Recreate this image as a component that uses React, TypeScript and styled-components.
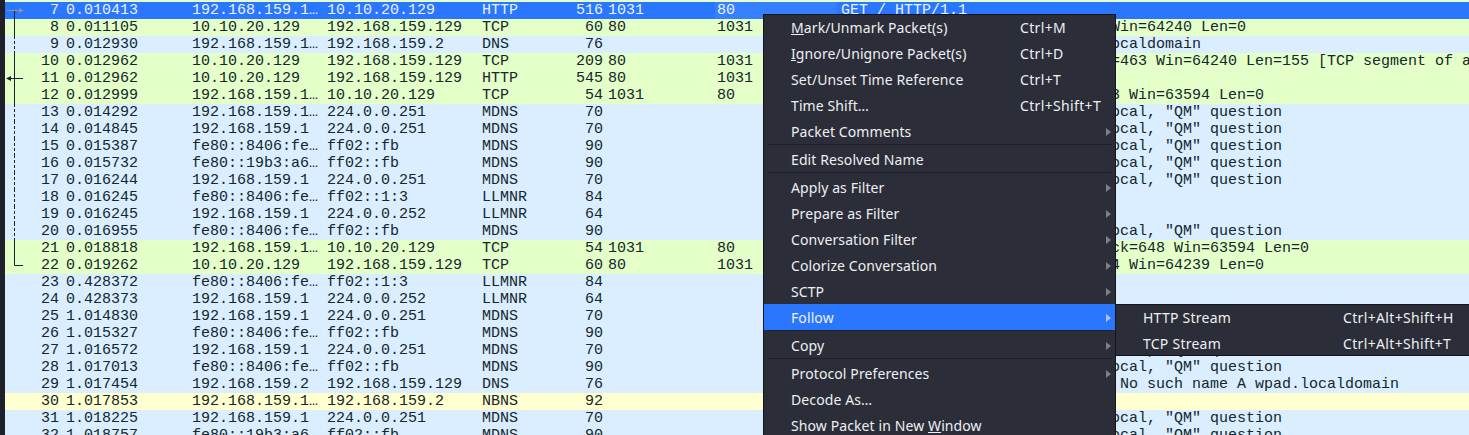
import React from "react";
import styled, { createGlobalStyle } from "styled-components";

const Global = createGlobalStyle`
  html, body { margin: 0; padding: 0; background: #daeeff; overflow: hidden; }
`;

type Tone = "sel" | "green" | "blue" | "yellow";
const toneBg: Record<Tone, string> = { sel: "#2a76ff", green: "#e4ffc7", blue: "#daeeff", yellow: "#ffffcf" };

const Page = styled.div`
  position: relative;
  width: 1469px;
  height: 435px;
  overflow: hidden;
  display: flex;
  background: #daeeff;
`;
const Strip = styled.div`
  width: 5px;
  flex: none;
  background: #1f2029;
`;
const List = styled.div`
  flex: 1;
  min-width: 0;
  display: flex;
  flex-direction: column;
  padding-top: 2px;
  background: linear-gradient(#e4ffc7 2px, transparent 2px);
`;
const Row = styled.div<{ $tone: Tone }>`
  flex: none;
  height: 17px;
  display: grid;
  grid-template-columns: 54px 7px 126px 135px 155px 78px 43px 5px 109px 124px 1fr;
  background: ${(p) => toneBg[p.$tone]};
  color: ${(p) => (p.$tone === "sel" ? "#e8f1ff" : "#12272e")};
  font: 15px/17px "Liberation Mono", monospace;
  white-space: pre;
`;
const NoCell = styled.div`
  position: relative;
  text-align: right;
`;
const Cell = styled.div`
  overflow: hidden;
`;
const FocusCell = styled.div<{ $on: boolean }>`
  overflow: hidden;
  margin-left: -2px;
  padding-left: 2px;
  margin-right: 4px;
  background: ${(p) => (p.$on ? "#3580ff" : "transparent")};
`;
const Gap = styled.div``;
const RightCell = styled.div`
  text-align: right;
`;
const Graph = styled.svg`
  position: absolute;
  left: 0;
  top: 0;
  width: 24px;
  height: 17px;
`;

const Menu = styled.div`
  position: absolute;
  left: 763px;
  top: 14px;
  width: 351px;
  background: #2b2d38;
  border: 1px solid #14151b;
  color: #eef0f2;
  font: 14px/26px "Noto Sans", sans-serif;
  letter-spacing: 0.1px;
`;
const MenuBody = styled.div`
  margin-top: -1px;
`;
const Item = styled.div<{ $active?: boolean }>`
  height: 26px;
  position: relative;
  display: flex;
  padding: 1px 0 0 27px;
  background: ${(p) => (p.$active ? "#2a76ff" : "transparent")};
  box-sizing: border-box;
`;
const Label = styled.span`
  width: 229px;
  flex: none;
  white-space: pre;
`;
const Shortcut = styled.span`
  white-space: pre;
  letter-spacing: 0.35px;
`;
const Mnemonic = styled.span`
  text-decoration: underline;
`;
const Arrow = styled.i<{ $active?: boolean }>`
  position: absolute;
  right: 4px;
  top: 10px;
  width: 0;
  height: 0;
  border-left: 5px solid ${(p) => (p.$active ? "#a9c6ff" : "#7d808b")};
  border-top: 4px solid transparent;
  border-bottom: 4px solid transparent;
`;
const Sep = styled.div`
  height: 2px;
  box-sizing: border-box;
  margin: 0 4px;
  border-top: 1px solid #1c1d25;
`;
const Submenu = styled.div`
  position: absolute;
  left: 1115px;
  top: 304px;
  width: 354px;
  height: 50px;
  background: #2b2d38;
  border: 1px solid #14151b;
  border-right: none;
  color: #eef0f2;
  font: 14px/26px "Noto Sans", sans-serif;
  letter-spacing: 0.25px;
`;
const SubItem = styled.div`
  height: 26px;
  display: flex;
  padding-left: 27px;
`;
const SubLabel = styled.span`
  width: 200px;
  flex: none;
`;

type R = [number, string, string, string, string, string, string, string, string, Tone];
const SRC = "192.168.159.1…";
const FE = "fe80::8406:fe…";
const FE2 = "fe80::19b3:a6…";
const ONE = "192.168.159.1";
const SV = "10.10.20.129";
const CL = "192.168.159.129";
const QM = 'Standard query 0x0000 A wpad.local, "QM" question';
const LL = "Standard query 0x0000 A wpad";
const rows: R[] = [
  [7, "0.010413", SRC, SV, "HTTP", "516", "1031", "80", "GET / HTTP/1.1", "sel"],
  [8, "0.011105", SV, CL, "TCP", "60", "80", "1031", "80 → 1031 [ACK] Seq=1 Ack=463 Win=64240 Len=0", "green"],
  [9, "0.012930", SRC, "192.168.159.2", "DNS", "76", "", "", "Standard query 0x7a2c A wpad.localdomain", "blue"],
  [10, "0.012962", SV, CL, "TCP", "209", "80", "1031", "80 → 1031 [PSH, ACK] Seq=1 Ack=463 Win=64240 Len=155 [TCP segment of a reassembled PDU]", "green"],
  [11, "0.012962", SV, CL, "HTTP", "545", "80", "1031", "HTTP/1.1 200 OK  (text/html)", "green"],
  [12, "0.012999", SRC, SV, "TCP", "54", "1031", "80", "1031 → 80 [ACK] Seq=463 Ack=153 Win=63594 Len=0", "green"],
  [13, "0.014292", SRC, "224.0.0.251", "MDNS", "70", "", "", QM, "blue"],
  [14, "0.014845", ONE, "224.0.0.251", "MDNS", "70", "", "", QM, "blue"],
  [15, "0.015387", FE, "ff02::fb", "MDNS", "90", "", "", QM, "blue"],
  [16, "0.015732", FE2, "ff02::fb", "MDNS", "90", "", "", QM, "blue"],
  [17, "0.016244", ONE, "224.0.0.251", "MDNS", "70", "", "", QM, "blue"],
  [18, "0.016245", FE, "ff02::1:3", "LLMNR", "84", "", "", LL, "blue"],
  [19, "0.016245", ONE, "224.0.0.252", "LLMNR", "64", "", "", LL, "blue"],
  [20, "0.016955", FE, "ff02::fb", "MDNS", "90", "", "", QM, "blue"],
  [21, "0.018818", SRC, SV, "TCP", "54", "1031", "80", "1031 → 80 [FIN, ACK] Seq=463 Ack=648 Win=63594 Len=0", "green"],
  [22, "0.019262", SV, CL, "TCP", "60", "80", "1031", "80 → 1031 [ACK] Seq=648 Ack=464 Win=64239 Len=0", "green"],
  [23, "0.428372", FE, "ff02::1:3", "LLMNR", "84", "", "", LL, "blue"],
  [24, "0.428373", ONE, "224.0.0.252", "LLMNR", "64", "", "", LL, "blue"],
  [25, "1.014830", ONE, "224.0.0.251", "MDNS", "70", "", "", QM, "blue"],
  [26, "1.015327", FE, "ff02::fb", "MDNS", "90", "", "", QM, "blue"],
  [27, "1.016572", ONE, "224.0.0.251", "MDNS", "70", "", "", QM, "blue"],
  [28, "1.017013", FE, "ff02::fb", "MDNS", "90", "", "", QM, "blue"],
  [29, "1.017454", "192.168.159.2", CL, "DNS", "76", "", "", "Standard query response 0x7a2c No such name A wpad.localdomain", "blue"],
  [30, "1.017853", SRC, "192.168.159.2", "NBNS", "92", "", "", "Name query NB WPAD<00>", "yellow"],
  [31, "1.018225", ONE, "224.0.0.251", "MDNS", "70", "", "", QM, "blue"],
  [32, "1.018757", FE2, "ff02::fb", "MDNS", "90", "", "", QM, "blue"],
];

const INK = "#12272e";
function RelGraph({ n }: { n: number }) {
  if (n === 7)
    return (
      <Graph viewBox="0 0 24 17">
        <path d="M9.5 8.5V17" stroke={INK} fill="none" />
        <path d="M2 8.5H18" stroke="#8d93a0" fill="none" />
        <path d="M19 8.5l-5-2.5v5z" fill="#8d93a0" />
      </Graph>
    );
  if (n === 22)
    return (
      <Graph viewBox="0 0 24 17">
        <path d="M9.5 0V8.5H18" stroke={INK} fill="none" />
      </Graph>
    );
  if (n === 11)
    return (
      <Graph viewBox="0 0 24 17">
        <path d="M9.5 0V17" stroke={INK} fill="none" />
        <path d="M2 8.5H18" stroke={INK} fill="none" />
        <path d="M1 8.5l5-2.5v5z" fill={INK} />
      </Graph>
    );
  const solid = [8, 10, 12, 21].includes(n);
  if (n > 22) return null;
  return (
    <Graph viewBox="0 0 24 17">
      <path d="M9.5 0V17" stroke={INK} fill="none" strokeDasharray={solid ? undefined : "3 2"} />
    </Graph>
  );
}

type MI = { t?: React.ReactNode; s?: string; arrow?: boolean; active?: boolean; sep?: boolean };
const menu: MI[] = [
  { t: <><Mnemonic>M</Mnemonic>ark/Unmark Packet(s)</>, s: "Ctrl+M" },
  { t: <><Mnemonic>I</Mnemonic>gnore/Unignore Packet(s)</>, s: "Ctrl+D" },
  { t: "Set/Unset Time Reference", s: "Ctrl+T" },
  { t: "Time Shift…", s: "Ctrl+Shift+T" },
  { t: "Packet Comments", arrow: true },
  { sep: true },
  { t: "Edit Resolved Name" },
  { sep: true },
  { t: "Apply as Filter", arrow: true },
  { t: "Prepare as Filter", arrow: true },
  { t: "Conversation Filter", arrow: true },
  { t: "Colorize Conversation", arrow: true },
  { t: "SCTP", arrow: true },
  { t: "Follow", arrow: true, active: true },
  { sep: true },
  { t: "Copy", arrow: true },
  { sep: true },
  { t: "Protocol Preferences", arrow: true },
  { t: "Decode As…" },
  { t: <>Show Packet in New <Mnemonic>W</Mnemonic>indow</> },
];

export default function App() {
  return (
    <Page>
      <Global />
      <Strip />
      <List>
        {rows.map((r) => (
          <Row key={r[0]} $tone={r[9]}>
            <NoCell>
              <RelGraph n={r[0]} />
              {r[0]}
            </NoCell>
            <Gap />
            <Cell>{r[1]}</Cell>
            <Cell>{r[2]}</Cell>
            <Cell>{r[3]}</Cell>
            <Cell>{r[4]}</Cell>
            <RightCell>{r[5]}</RightCell>
            <Gap />
            <Cell>{r[6]}</Cell>
            <FocusCell $on={r[9] === "sel"}>{r[7]}</FocusCell>
            <Cell>{r[8]}</Cell>
          </Row>
        ))}
      </List>
      <Menu>
        <MenuBody>
          {menu.map((m, i) =>
            m.sep ? (
              <Sep key={i} />
            ) : (
              <Item key={i} $active={m.active}>
                <Label>{m.t}</Label>
                {m.s && <Shortcut>{m.s}</Shortcut>}
                {m.arrow && <Arrow $active={m.active} />}
              </Item>
            )
          )}
        </MenuBody>
      </Menu>
      <Submenu>
        <SubItem>
          <SubLabel>HTTP Stream</SubLabel>
          <Shortcut>Ctrl+Alt+Shift+H</Shortcut>
        </SubItem>
        <SubItem>
          <SubLabel>TCP Stream</SubLabel>
          <Shortcut>Ctrl+Alt+Shift+T</Shortcut>
        </SubItem>
      </Submenu>
    </Page>
  );
}
